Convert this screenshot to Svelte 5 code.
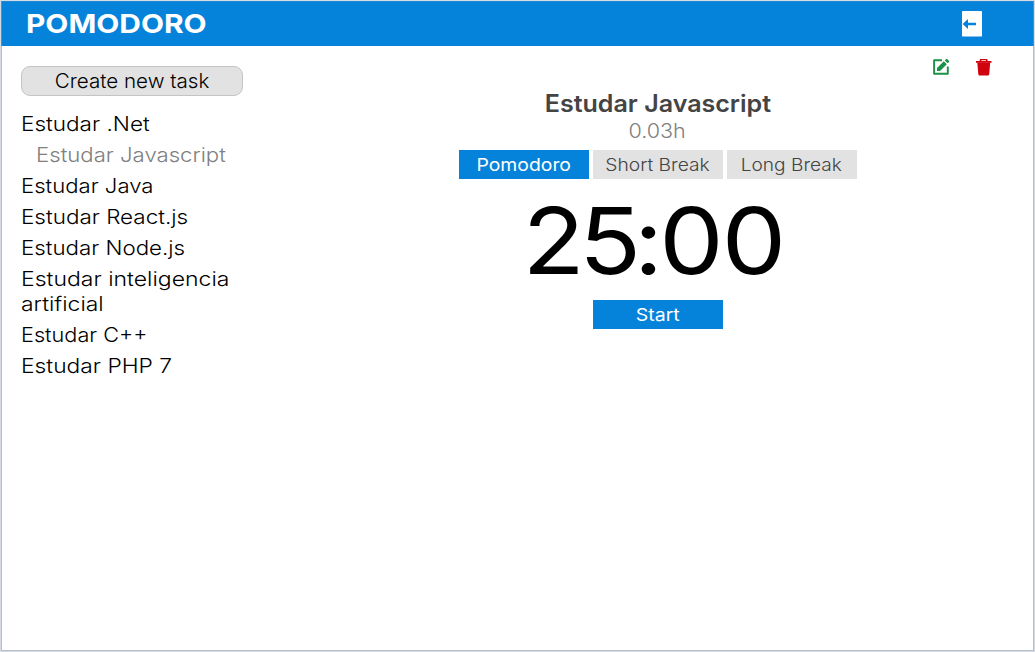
<script>
  const tasks = [
    { lines: [{ text: 'Estudar .Net', stretch: 1.127 }] },
    { lines: [{ text: 'Estudar Javascript', stretch: 1.108 }], active: true },
    { lines: [{ text: 'Estudar Java', stretch: 1.106 }] },
    { lines: [{ text: 'Estudar React.js', stretch: 1.123 }] },
    { lines: [{ text: 'Estudar Node.js', stretch: 1.115 }] },
    {
      lines: [
        { text: 'Estudar inteligencia', stretch: 1.15 },
        { text: 'artificial', stretch: 1.145 }
      ]
    },
    { lines: [{ text: 'Estudar C++', stretch: 1.084 }] },
    { lines: [{ text: 'Estudar PHP 7', stretch: 1.14 }] }
  ];
  const modes = [
    { label: 'Pomodoro', stretch: 1.107, on: true },
    { label: 'Short Break', stretch: 1.1 },
    { label: 'Long Break', stretch: 1.092 }
  ];
</script>

<div class="app">
  <header>
    <h1>POMODORO</h1>
    <svg class="exit" width="20" height="26" viewBox="0 0 20 26">
      <rect width="20" height="25.5" rx="0.8" fill="#fff" />
      <path d="M0.600 13 6 8v3.700h8v2.600H6v3.700z" fill="#0583db" />
    </svg>
  </header>
  <main>
    <aside>
      <button class="create"><span>Create new task</span></button>
      <ul>
        {#each tasks as task}
          <li class:active={task.active}>
            {#each task.lines as line}
              <span style:transform="scaleX({line.stretch})">{line.text}</span>
            {/each}
          </li>
        {/each}
      </ul>
    </aside>
    <section>
      <div class="tools">
        <svg width="18" height="18" viewBox="0 0 18 18">
          <path d="M10 2.200H2.100v13.600h13.700V8.400" fill="none" stroke="#1a9147" stroke-width="1.900" stroke-linejoin="round" />
          <path d="M5 10.100 11.800 3.300l3 3-6.800 6.800H5zM12.800 2.400 14.200 1.100q.5-.5 1 0l1.800 1.800q.5.5 0 1L15.700 5.300z" fill="#1a9147" />
        </svg>
        <svg width="18" height="18" viewBox="0 0 18 18">
          <path d="M1 3h3.700V1.700Q4.700 1 5.400 1h6.400q.7 0 .7.700V3H16.500v1.800H1zM6.200 2.200V3H11V2.200z" fill="#d0020e" fill-rule="evenodd" />
          <path d="M2.300 4.500H15.200L14.200 16.200q-.1 1.300-1.400 1.300H4.700q-1.300 0-1.400-1.300z" fill="#d0020e" />
        </svg>
      </div>
      <h2>Estudar Javascript</h2>
      <p class="hours">0.03h</p>
      <div class="modes">
        {#each modes as mode}
          <button class="mode" class:on={mode.on}>
            <span style:transform="scaleX({mode.stretch})">{mode.label}</span>
          </button>
        {/each}
      </div>
      <div class="timer"><span class="minutes">25</span><span class="colon">:</span>00</div>
      <button class="mode on"><span class="start">Start</span></button>
    </section>
  </main>
</div>

<style>
  .app {
    box-sizing: border-box;
    width: 1035px;
    height: 652px;
    border: 1px solid #d5dae3;
    background: #fff;
    font-family: Inter, "Liberation Sans", sans-serif;
    font-weight: 300;
    color: #000;
    overflow: hidden;
    display: flex;
    flex-direction: column;
  }
  header {
    height: 45px;
    flex: none;
    background: #0583db;
    box-shadow: inset 1px 0 #3f93cf, inset -1px 0 #3f93cf, inset 0 1px #2089d5;
    display: flex;
    justify-content: space-between;
    align-items: center;
    padding: 0 52px 0 25px;
    box-sizing: border-box;
  }
  h1 {
    margin: 0;
    font-size: 26px;
    line-height: 32px;
    font-weight: 700;
    color: #fff;
    transform: scaleX(1.15);
    transform-origin: left;
  }
  .exit { display: block; }
  main {
    flex: 1;
    display: flex;
    border: 1px solid #b5bfcc;
    border-top: 0;
  }
  aside { flex: none; width: 222px; padding: 20px 0 0 19px; }
  button {
    font: inherit;
    padding: 0;
    border: 0;
    display: block;
    white-space: nowrap;
    background: #e2e2e2;
  }
  button span { display: inline-block; }
  .create {
    width: 222px;
    height: 30px;
    border: 1px solid #c4c4c4;
    border-radius: 9px;
    font-size: 20px;
    color: #000;
  }
  .create span { transform: scaleX(1.03); }
  ul { list-style: none; margin: 16px 0 0; padding: 0; font-size: 20px; }
  li { margin-bottom: 6px; line-height: 25px; }
  li span { display: block; width: max-content; white-space: nowrap; transform-origin: left; }
  li.active { padding-left: 15px; color: #808080; }
  section {
    flex: none;
    margin-left: 40px;
    width: 750px;
    display: flex;
    flex-direction: column;
    align-items: center;
  }
  .tools {
    align-self: stretch;
    height: 43px;
    padding: 12px 40.5px 0 0;
    box-sizing: border-box;
    display: flex;
    justify-content: flex-end;
    gap: 25px;
  }
  h2 {
    margin: 0;
    font-size: 24px;
    line-height: 30px;
    font-weight: 600;
    color: #444;
    transform: translateX(-0.5px) scaleX(1.044);
  }
  .hours {
    margin: 0;
    font-size: 20px;
    line-height: 25px;
    color: #808080;
    transform: translateX(-0.5px) scaleX(1.077);
  }
  .modes { display: flex; gap: 4px; margin-top: 6px; }
  .mode { width: 130px; height: 29px; font-size: 17.5px; color: #444; }
  .mode span { margin-left: -1px; }
  .mode.on { background: #0583db; color: #fff; font-weight: 400; }
  .start { transform: scaleX(1.117); }
  .timer {
    font-size: 92px;
    line-height: 121px;
    font-weight: 400;
    font-feature-settings: "calt" 0;
    letter-spacing: -1.7px;
    transform: translate(-4.5px, 1px) scaleX(1.11);
  }
  .minutes { letter-spacing: -5.3px; }
  .colon { margin: 0 -2px 0 -1.2px; }
</style>
